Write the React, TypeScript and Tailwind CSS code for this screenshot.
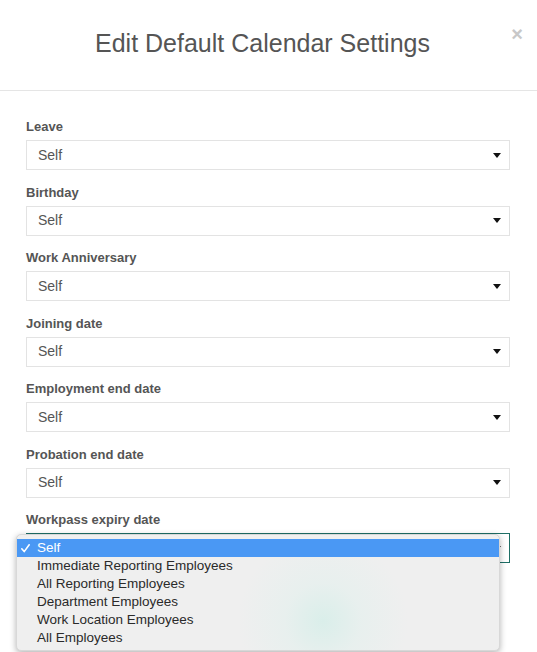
import React from "react";

const fields = [
  "Leave",
  "Birthday",
  "Work Anniversary",
  "Joining date",
  "Employment end date",
  "Probation end date",
  "Workpass expiry date",
];

const options = [
  "Self",
  "Immediate Reporting Employees",
  "All Reporting Employees",
  "Department Employees",
  "Work Location Employees",
  "All Employees",
];

function Arrow() {
  return (
    <svg width="8" height="5" viewBox="0 0 8 5" className="block">
      <path d="M0 0 H8 L4 5 Z" fill="#111" />
    </svg>
  );
}

function Check() {
  return (
    <svg width="9" height="9" viewBox="0 0 9 9" className="block">
      <path d="M0.8 4.8 L3.2 7.6 L8.2 0.8" fill="none" stroke="#fff" strokeWidth="1.6" strokeLinecap="round" strokeLinejoin="round" />
    </svg>
  );
}

export default function App() {
  return (
    <div
      className="relative w-[537px] h-[652px] bg-white overflow-hidden"
      style={{ fontFamily: '"Liberation Sans", Arial, Helvetica, sans-serif' }}
    >
      <div className="relative h-[91px] border-b border-[#e5e5e5] flex items-center justify-center pr-[12px]">
        <h1 className="text-[25px] text-[#555] font-normal leading-none mb-[3px]">
          Edit Default Calendar Settings
        </h1>
        <span className="absolute right-[14px] top-[24px] text-[20px] font-bold leading-none text-[#c8c8c8]">
          ×
        </span>
      </div>
      <div className="pt-[27px] px-[26px] flex flex-col">
        {fields.map((f, i) => {
          const last = i === fields.length - 1;
          return (
            <div key={f} className="mb-[13.5px]">
              <div className="text-[13px] font-bold text-[#555] leading-[18px]">{f}</div>
              <div
                className={
                  "mt-[4px] h-[30px] w-[484px] border flex items-center justify-between pl-[11px] pr-[8px] " +
                  (last ? "border-[#1f6f66]" : "border-[#e3e3e3]")
                }
              >
                <span className="text-[14px] text-[#555]">Self</span>
                <Arrow />
              </div>
            </div>
          );
        })}
      </div>
      <div className="absolute left-[16px] top-[534px] w-[484px] h-[117px] rounded-[5px] bg-[#efefef] bg-[radial-gradient(circle_at_306px_86px,rgba(214,238,233,0.85),rgba(226,240,237,0.55)_38px,rgba(239,239,239,0)_85px)] shadow-[0_2px_6px_rgba(0,0,0,0.3)] border border-[#d8d8d8] pt-[4px]">
        {options.map((o, i) => (
          <div
            key={o}
            className={
              "h-[18px] flex items-center text-[13.5px] leading-none " +
              (i === 0 ? "bg-[#4a98f4] text-white" : "text-[#2a2a2a]")
            }
          >
            <span className="w-[20px] pl-[4px] shrink-0 flex items-center">{i === 0 ? <Check /> : null}</span>
            <span>{o}</span>
          </div>
        ))}
      </div>
    </div>
  );
}
